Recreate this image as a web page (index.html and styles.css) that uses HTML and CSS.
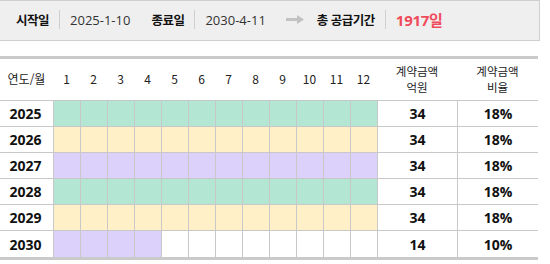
FILE: index.html
```html
<!DOCTYPE html>
<html lang="ko">
<head>
<meta charset="utf-8">
<link rel="stylesheet" href="styles.css">
</head>
<body>
<div class="summary">
  <div class="field">
    <span class="label">시작일</span><span class="sep"></span><span class="value">2025-1-10</span>
  </div>
  <div class="field">
    <span class="label">종료일</span><span class="sep"></span><span class="value">2030-4-11</span>
  </div>
  <svg class="arrow" width="18" height="9" viewBox="0 0 18 9">
    <path d="M0 4.5H13" stroke="#c2c2c2" stroke-width="3"/>
    <path d="M11 0L18 4.5L11 9Z" fill="#c2c2c2"/>
  </svg>
  <div class="field">
    <span class="label">총 공급기간</span><span class="sep"></span><span class="total">1917일</span>
  </div>
</div>

<div class="grid">
  <div class="hd">연도/월</div>
  <div class="hd">1</div><div class="hd">2</div><div class="hd">3</div><div class="hd">4</div>
  <div class="hd">5</div><div class="hd">6</div><div class="hd">7</div><div class="hd">8</div>
  <div class="hd">9</div><div class="hd">10</div><div class="hd">11</div><div class="hd">12</div>
  <div class="hd two"><span>계약금액</span><span>억원</span></div>
  <div class="hd two"><span>계약금액</span><span>비율</span></div>

  <div class="yr">2025</div>
  <div class="m g"></div><div class="m g"></div><div class="m g"></div><div class="m g"></div><div class="m g"></div><div class="m g"></div>
  <div class="m g"></div><div class="m g"></div><div class="m g"></div><div class="m g"></div><div class="m g"></div><div class="m g"></div>
  <div class="num">34</div><div class="num">18%</div>

  <div class="yr">2026</div>
  <div class="m y"></div><div class="m y"></div><div class="m y"></div><div class="m y"></div><div class="m y"></div><div class="m y"></div>
  <div class="m y"></div><div class="m y"></div><div class="m y"></div><div class="m y"></div><div class="m y"></div><div class="m y"></div>
  <div class="num">34</div><div class="num">18%</div>

  <div class="yr">2027</div>
  <div class="m p"></div><div class="m p"></div><div class="m p"></div><div class="m p"></div><div class="m p"></div><div class="m p"></div>
  <div class="m p"></div><div class="m p"></div><div class="m p"></div><div class="m p"></div><div class="m p"></div><div class="m p"></div>
  <div class="num">34</div><div class="num">18%</div>

  <div class="yr">2028</div>
  <div class="m g"></div><div class="m g"></div><div class="m g"></div><div class="m g"></div><div class="m g"></div><div class="m g"></div>
  <div class="m g"></div><div class="m g"></div><div class="m g"></div><div class="m g"></div><div class="m g"></div><div class="m g"></div>
  <div class="num">34</div><div class="num">18%</div>

  <div class="yr">2029</div>
  <div class="m y"></div><div class="m y"></div><div class="m y"></div><div class="m y"></div><div class="m y"></div><div class="m y"></div>
  <div class="m y"></div><div class="m y"></div><div class="m y"></div><div class="m y"></div><div class="m y"></div><div class="m y"></div>
  <div class="num">34</div><div class="num">18%</div>

  <div class="yr last">2030</div>
  <div class="m p last"></div><div class="m p last"></div><div class="m p last"></div><div class="m p last"></div><div class="m last"></div><div class="m last"></div>
  <div class="m last"></div><div class="m last"></div><div class="m last"></div><div class="m last"></div><div class="m last"></div><div class="m last"></div>
  <div class="num last">14</div><div class="num last">10%</div>
</div>
</body>
</html>
```

FILE: styles.css
```css
html, body {
  margin: 0;
  padding: 0;
  background: #fff;
}
body {
  font-family: "Open Sans", "Noto Sans CJK KR", sans-serif;
  color: #222;
  width: 550px;
}
.summary {
  box-sizing: border-box;
  width: 540px;
  height: 41px;
  background: #efefef;
  border: 1px solid #cfcfcf;
  border-left: none;
  display: flex;
  align-items: center;
  padding-left: 16px;
  padding-bottom: 2px;
}
.field {
  display: flex;
  align-items: center;
  gap: 10px;
  margin-right: 21px;
}
.label {
  font-family: "Noto Sans CJK KR", sans-serif;
  font-weight: 700;
  font-size: 12.5px;
  letter-spacing: -0.5px;
  color: #111;
}
.sep {
  width: 1px;
  height: 19px;
  background: #cfcfcf;
}
.value {
  font-size: 13px;
  color: #333;
}
.arrow {
  margin-left: -1px;
  margin-right: 13px;
}
.total {
  font-weight: 700;
  font-size: 15px;
  color: #f04b5a;
  letter-spacing: -0.3px;
}
.grid {
  margin-top: 15px;
  width: 538px;
  display: grid;
  grid-template-columns: 53px repeat(12, 27px) 80px 81px;
  grid-auto-rows: 26px;
  grid-template-rows: 42px;
  border-top: 3px solid #cacaca;
  border-bottom: 3px solid #cacaca;
}
.hd {
  box-sizing: border-box;
  border-bottom: 1px solid #c8c8c8;
  display: flex;
  align-items: center;
  justify-content: center;
  text-align: center;
  font-family: "Noto Sans CJK KR", sans-serif;
  font-size: 12px;
  line-height: 15px;
  color: #222;
  padding-bottom: 2px;
}
.two {
  flex-direction: column;
  font-size: 11.5px;
  line-height: 16px;
}
.yr, .m, .num {
  box-sizing: border-box;
  border-bottom: 1px solid #c8c8c8;
}
.m, .num {
  border-left: 1px solid #c8c8c8;
}
.yr, .num {
  display: flex;
  align-items: center;
  justify-content: center;
  font-weight: 700;
  font-size: 14px;
  color: #111;
}
.yr {
  padding-right: 2px;
}
.last {
  border-bottom: none;
}
.g { background: #b3e6d3; }
.y { background: #fff0c7; }
.p { background: #dcd1fb; }
```
